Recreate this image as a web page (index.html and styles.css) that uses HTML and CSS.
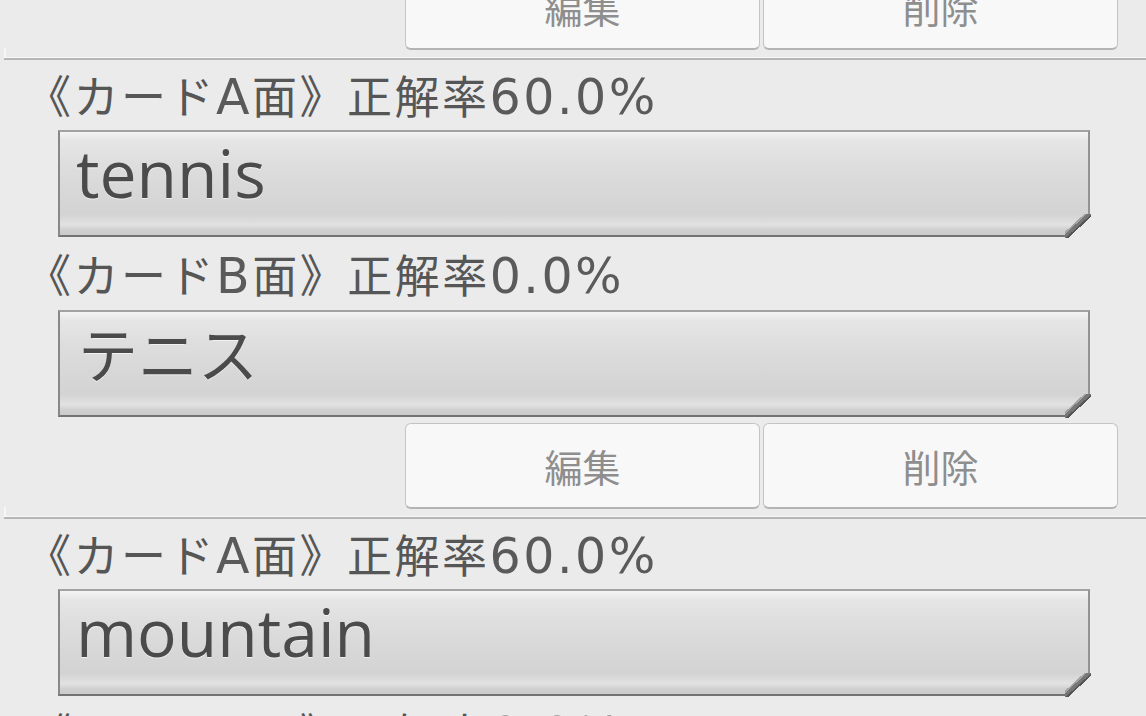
FILE: index.html
```html
<!DOCTYPE html>
<html lang="ja">
<head>
<meta charset="utf-8">
<title>カード一覧</title>
<link rel="stylesheet" href="styles.css">
</head>
<body>
<div class="list">
  <div class="actions actions-top">
    <button class="btn">編集</button>
    <button class="btn">削除</button>
  </div>
  <div class="divider"></div>

  <section class="card">
    <p class="label">《カード<span class="lat">A</span>面》正解率<span class="lat">60.0%</span></p>
    <div class="face"><span class="face-text">tennis</span></div>
    <p class="label label-b">《カード<span class="lat">B</span>面》正解率<span class="lat">0.0%</span></p>
    <div class="face ja"><span class="face-text">テニス</span></div>
    <div class="actions">
      <button class="btn">編集</button>
      <button class="btn">削除</button>
    </div>
  </section>
  <div class="divider"></div>

  <section class="card">
    <p class="label">《カード<span class="lat">A</span>面》正解率<span class="lat">60.0%</span></p>
    <div class="face"><span class="face-text">mountain</span></div>
    <p class="label label-b">《カード<span class="lat">B</span>面》正解率<span class="lat">0.0%</span></p>
  </section>
</div>
</body>
</html>
```

FILE: styles.css
```css
html, body {
  margin: 0;
  padding: 0;
}

body {
  background: #ebebeb;
  width: 1146px;
  height: 716px;
  overflow: hidden;
  font-family: "Noto Sans CJK JP", sans-serif;
  color: #555555;
}

.list {
  display: flex;
  flex-direction: column;
}

.actions {
  display: flex;
  gap: 3px;
  margin-left: 405px;
  width: 713px;
  height: 86px;
  margin-top: 6px;
}

.actions-top {
  margin-top: -36px;
}

.btn {
  flex: 1;
  height: 86px;
  margin: 0;
  padding: 0;
  box-sizing: border-box;
  background: #f8f8f8;
  border: 1px solid #c4c4c4;
  border-bottom: 2px solid #b4b4b4;
  border-radius: 6px;
  font-family: "Noto Sans CJK JP", sans-serif;
  font-size: 38px;
  color: #8e8e8e;
  line-height: 1;
}

.divider {
  margin-top: 7px;
  margin-left: 4px;
  height: 3px;
  background: linear-gradient(to bottom, #f8f8f8 0 1px, #b6b6b6 1px 3px);
  position: relative;
}

.divider::before {
  content: "";
  position: absolute;
  left: 0;
  top: -9px;
  width: 2px;
  height: 9px;
  background: #f6f6f6;
}

.card {
  display: flex;
  flex-direction: column;
}

.label {
  margin: 0;
  padding-left: 26px;
  height: 70px;
  font-size: 45px;
  line-height: 70px;
  letter-spacing: 2.5px;
  white-space: nowrap;
  color: #565656;
}

.label-b {
  height: 73px;
  line-height: 73px;
}

.lat {
  font-family: "DejaVu Sans", sans-serif;
  font-size: 49px;
  line-height: 1;
  color: #5a5a5a;
}

.face {
  position: relative;
  box-sizing: border-box;
  margin-left: 58px;
  width: 1032px;
  height: 107px;
  border-style: solid;
  border-width: 2px;
  border-color: #a2a2a2 #939393 #737373 #888888;
  background: linear-gradient(to bottom,
    #f4f4f4 0%,
    #e6e6e6 8%,
    #dedede 30%,
    #d8d8d8 55%,
    #d3d3d3 80%,
    #e2e2e2 90%,
    #d0d0d0 95%,
    #cbcbcb 100%);
  display: flex;
  align-items: center;
  padding-left: 16px;
  padding-bottom: 24px;
}

.face::after {
  content: "";
  position: absolute;
  right: -3px;
  bottom: -3px;
  width: 26px;
  height: 24px;
  background: linear-gradient(to top left,
    #ebebeb 0 44%,
    #555555 44% 49%,
    #767676 49% 58%,
    #a4a4a4 58% 63%,
    rgba(0,0,0,0) 63%);
}

.face-text {
  font-family: "Open Sans", "Noto Sans CJK JP", sans-serif;
  font-size: 66px;
  line-height: 1;
  color: #4b4b4b;
  text-shadow: 0 1px 0 rgba(255,255,255,0.6);
}

.ja .face-text {
  font-family: "Noto Sans CJK JP", sans-serif;
  font-size: 60px;
  padding-left: 2px;
}
```
